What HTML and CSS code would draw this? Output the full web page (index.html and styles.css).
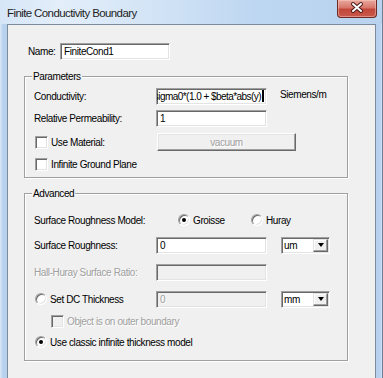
FILE: index.html
```html
<!DOCTYPE html>
<html>
<head>
<meta charset="utf-8">
<link rel="stylesheet" href="styles.css">
</head>
<body>
<div class="window">
  <div class="titlebar">
    <span class="title">Finite Conductivity Boundary</span>
    <div class="close">
      <svg width="40" height="18" viewBox="0 0 40 18">
        <path d="M16 5 L24 12 M24 5 L16 12" stroke="#4a1a16" stroke-width="4" stroke-linecap="round"/>
        <path d="M16 5 L24 12 M24 5 L16 12" stroke="#ffffff" stroke-width="2" stroke-linecap="round"/>
      </svg>
    </div>
  </div>
  <div class="client">
    <div class="name-row">
      <span class="name-lbl">Name:</span>
      <div class="field name-field">FiniteCond1</div>
    </div>

    <fieldset class="group params">
      <legend>Parameters</legend>
      <div class="row p1">
        <span class="lbl">Conductivity:</span>
        <div class="field wide expr"><span class="expr-text">sigma0*(1.0 + $beta*abs(y)</span><span class="caret"></span></div>
        <span class="unit">Siemens/m</span>
      </div>
      <div class="row p2">
        <span class="lbl">Relative Permeability:</span>
        <div class="field wide">1</div>
      </div>
      <div class="row p3">
        <span class="chk-lbl"><span class="cb"></span>Use Material:</span>
        <div class="btn">vacuum</div>
      </div>
      <div class="row p4">
        <span class="chk-lbl"><span class="cb"></span>Infinite Ground Plane</span>
      </div>
    </fieldset>

    <fieldset class="group adv">
      <legend>Advanced</legend>
      <div class="row a1">
        <span class="lbl model-lbl">Surface Roughness Model:</span>
        <span class="opt opt-g"><span class="rb on"></span>Groisse</span>
        <span class="opt"><span class="rb"></span>Huray</span>
      </div>
      <div class="row a2">
        <span class="lbl">Surface Roughness:</span>
        <div class="field wide">0</div>
        <div class="combo"><span class="combo-text">um</span><span class="arrow"><span class="tri"></span></span></div>
      </div>
      <div class="row a3">
        <span class="lbl disabled">Hall-Huray Surface Ratio:</span>
        <div class="field wide off"></div>
      </div>
      <div class="row a4">
        <span class="chk-lbl"><span class="rb"></span>Set DC Thickness</span>
        <div class="field wide off disabled">0</div>
        <div class="combo"><span class="combo-text">mm</span><span class="arrow"><span class="tri"></span></span></div>
      </div>
      <div class="row a5">
        <span class="chk-lbl sub disabled"><span class="cb off"></span>Object is on outer boundary</span>
      </div>
      <div class="row a6">
        <span class="chk-lbl"><span class="rb on"></span>Use classic infinite thickness model</span>
      </div>
    </fieldset>

    <div class="bottom-row">
      <div class="okbtn"></div>
    </div>
  </div>
</div>
</body>
</html>
```

FILE: styles.css
```css
body {
  margin: 0;
  background: #f0f0f0;
}

.window {
  width: 383px;
  height: 378px;
  overflow: hidden;
  display: flex;
  flex-direction: column;
  box-sizing: border-box;
  background: linear-gradient(to right, #dce9f7 0px, #b7d1ee 3px, #b7d1ee 380px, #cfe1f5 382px);
  border-right: 1px solid #6f7f93;
  font-family: "Liberation Sans", Arial, sans-serif;
  font-size: 10px;
  letter-spacing: -0.4px;
  color: #000;
}

.titlebar {
  height: 24px;
  flex: none;
  display: flex;
  align-items: flex-start;
  padding-left: 7px;
  background: linear-gradient(to right, #d6e6f7 0px, #e3eefa 60px, #d3e4f6 150px, #bdd6f1 260px, #b9d3ef 383px);
}

.title {
  font-family: "Liberation Sans", Arial, sans-serif;
  font-size: 11.5px;
  letter-spacing: -0.6px;
  line-height: 14px;
  margin-top: 6px;
  color: #1e1e1e;
}

.close {
  margin-left: auto;
  margin-right: 5px;
  width: 40px;
  height: 18px;
  box-sizing: border-box;
  border: 1px solid #6d2a24;
  border-top: none;
  border-radius: 0 0 4px 4px;
  background: linear-gradient(to bottom, #e8a89f 0%, #d8776b 45%, #c2473a 55%, #c85a4c 100%);
  box-shadow: inset 0 0 0 1px rgba(255, 210, 200, 0.45);
}

.close svg {
  display: block;
  margin: -1px 0 0 -1px;
}

.client {
  flex: 1;
  margin: 0 6px 0 7px;
  border: 1px solid #7b8a9c;
  border-bottom: none;
  background: #f0f0f0;
  display: flex;
  flex-direction: column;
}

.name-row {
  display: flex;
  align-items: center;
  margin-top: 18px;
  padding-left: 20px;
}

.name-lbl {
  width: 32px;
}

.field {
  box-sizing: border-box;
  height: 17px;
  background: #fff;
  border-top: 1px solid #a0a0a0;
  border-left: 1px solid #a0a0a0;
  border-right: 1px solid #fff;
  border-bottom: 1px solid #fff;
  box-shadow: inset 1px 1px 0 #696969, inset -1px -1px 0 #e3e3e3;
  padding: 0 3px;
  display: flex;
  align-items: center;
  overflow: hidden;
  white-space: nowrap;
}

.name-field {
  width: 110px;
}

.wide {
  width: 111px;
}

.field.off {
  background: #f0f0f0;
}

.expr {
  justify-content: flex-end;
  padding-right: 2px;
}

.expr-text {
  flex: none;
  letter-spacing: -0.55px;
}

.caret {
  flex: none;
  width: 2px;
  height: 12px;
  background: #000;
  margin-left: 1px;
}

.group {
  margin: 0 0 0 16px;
  width: 324px;
  box-sizing: border-box;
  border: 1px solid #a0a0a0;
  box-shadow: inset 1px 1px 0 #fff, 1px 1px 0 #fff;
  padding: 0 0 0 9px;
  min-width: 0;
}

.group legend {
  padding: 0 1px;
  margin-left: -2px;
  line-height: 13px;
  background: #f0f0f0;
}

.params {
  margin-top: 10px;
  padding-bottom: 3px;
}

.adv {
  margin-top: 9px;
  padding-bottom: 8px;
}

.row {
  display: flex;
  align-items: center;
  height: 20px;
}

.lbl {
  width: 122px;
  flex: none;
  white-space: nowrap;
}

.unit {
  margin-left: 13px;
  margin-top: -4px;
}

.chk-lbl {
  width: 122px;
  flex: none;
  display: flex;
  align-items: center;
  white-space: nowrap;
}

.cb {
  flex: none;
  width: 13px;
  height: 13px;
  box-sizing: border-box;
  margin-left: 1px;
  margin-right: 3px;
  background: #fff;
  border-top: 1px solid #a0a0a0;
  border-left: 1px solid #a0a0a0;
  border-right: 1px solid #fff;
  border-bottom: 1px solid #fff;
  box-shadow: inset 1px 1px 0 #696969, inset -1px -1px 0 #e3e3e3;
}

.cb.off {
  background: #f0f0f0;
}

.rb {
  flex: none;
  position: relative;
  width: 12px;
  height: 12px;
  box-sizing: border-box;
  margin-left: 1px;
  margin-right: 3px;
  border-radius: 50%;
  background: #fff;
  border: 1px solid;
  border-color: #a0a0a0 #fff #fff #a0a0a0;
  box-shadow: inset 1px 1px 0 #696969, inset -1px -1px 0 #e3e3e3;
}

.rb.on::after {
  content: "";
  position: absolute;
  left: 3px;
  top: 3px;
  width: 4px;
  height: 4px;
  border-radius: 50%;
  background: #000;
}

.btn {
  box-sizing: border-box;
  width: 139px;
  height: 18px;
  background: #f0f0f0;
  border-top: 1px solid #fff;
  border-left: 1px solid #fff;
  border-right: 1px solid #696969;
  border-bottom: 1px solid #696969;
  box-shadow: inset -1px -1px 0 #a0a0a0, inset 1px 1px 0 #e3e3e3;
  color: #a0a0a0;
  text-shadow: 1px 1px 0 #fff;
  display: flex;
  align-items: center;
  justify-content: center;
  margin-left: 1px;
}

.p1 {
  margin-top: 3px;
}

.p2 {
  margin-top: 2px;
}

.p3 {
  margin-top: 4px;
}

.p4 {
  margin-top: 2px;
}

.disabled {
  color: #a0a0a0;
  text-shadow: 1px 1px 0 #fff;
}

.model-lbl {
  width: 143px;
}

.opt {
  display: flex;
  align-items: center;
}

.opt-g {
  width: 73px;
}

.combo {
  box-sizing: border-box;
  width: 49px;
  height: 17px;
  margin-left: 14px;
  background: #fff;
  border-top: 1px solid #a0a0a0;
  border-left: 1px solid #a0a0a0;
  border-right: 1px solid #fff;
  border-bottom: 1px solid #fff;
  box-shadow: inset 1px 1px 0 #696969, inset -1px -1px 0 #e3e3e3;
  display: flex;
  align-items: center;
  padding: 1px 1px 1px 2px;
}

.combo-text {
  flex: 1;
}

.arrow {
  box-sizing: border-box;
  width: 15px;
  height: 13px;
  background: #f0f0f0;
  border-top: 1px solid #e3e3e3;
  border-left: 1px solid #e3e3e3;
  border-right: 1px solid #696969;
  border-bottom: 1px solid #696969;
  box-shadow: inset -1px -1px 0 #a0a0a0, inset 1px 1px 0 #fff;
  display: flex;
  align-items: center;
  justify-content: center;
}

.tri {
  width: 0;
  height: 0;
  border-left: 3.5px solid transparent;
  border-right: 3.5px solid transparent;
  border-top: 4px solid #000;
}

.a1 {
  margin-top: 10px;
}

.a2 {
  margin-top: 5px;
}

.a3 {
  margin-top: 7px;
}

.a4 {
  margin-top: 7px;
}

.a5 {
  margin-top: 2px;
}

.a6 {
  margin-top: 1px;
}

.sub {
  padding-left: 16px;
}

.bottom-row {
  display: flex;
  padding-left: 162px;
  margin-top: 18px;
}

.okbtn {
  box-sizing: border-box;
  width: 64px;
  height: 22px;
  background: #f0f0f0;
  border-top: 1px solid #fff;
  border-left: 1px solid #fff;
  border-right: 1px solid #696969;
  border-bottom: 1px solid #696969;
  box-shadow: inset -1px -1px 0 #a0a0a0, inset 1px 1px 0 #e3e3e3;
}
```
